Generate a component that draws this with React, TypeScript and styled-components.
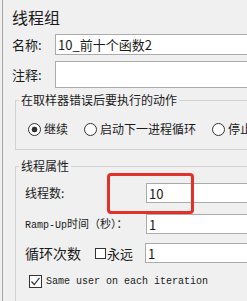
import React from 'react';
import styled, { createGlobalStyle } from 'styled-components';

const GlobalStyle = createGlobalStyle`
  html, body {
    margin: 0;
    padding: 0;
    background: #f0f0f0;
    overflow: hidden;
  }
  body {
    font-family: "Noto Sans CJK SC", "Noto Sans", sans-serif;
    color: #1b1b1b;
  }
`;

const Frame = styled.div`
  position: relative;
  width: 330px;
  height: 301px;
  margin-left: 2px;
  border-left: 1px solid #a6a6a6;
  padding-left: 9px;
  box-sizing: border-box;
  overflow: hidden;
`;

const Title = styled.div`
  padding-top: 5px;
  font-size: 16px;
  line-height: 24px;
`;

const Row = styled.div<{ $top: number; $height: number }>`
  display: flex;
  align-items: center;
  margin-top: ${p => p.$top}px;
  height: ${p => p.$height}px;
`;

const Label = styled.span<{ $width: number; $size?: number }>`
  flex: none;
  width: ${p => p.$width}px;
  font-size: ${p => p.$size ?? 13}px;
  line-height: 16px;
  white-space: nowrap;
`;

const Mono = styled.span`
  font-family: "Liberation Mono", "DejaVu Sans Mono", monospace;
  font-size: 10px;
`;

const Field = styled.div`
  flex: 1;
  align-self: stretch;
  display: flex;
  align-items: center;
  background: #fff;
  border: 1px solid #ababab;
  padding-left: 2px;
  font-size: 13px;
  white-space: nowrap;
`;

const Group = styled.fieldset<{ $top: number }>`
  margin: ${p => p.$top}px 0 0 3px;
  padding: 0;
  border: 1px solid #d2d2d2;
  min-width: 0;
`;

const Legend = styled.legend`
  margin-left: 3px;
  padding: 0 2px;
  font-size: 12px;
  line-height: 16px;
`;

const RadioRow = styled.div`
  display: flex;
  align-items: center;
  gap: 16px;
  padding: 13px 0 12px 12px;
  height: 16px;
`;

const Radio = styled.span<{ $checked?: boolean }>`
  display: inline-flex;
  align-items: center;
  gap: 3px;
  font-size: 12px;
  line-height: 16px;
  white-space: nowrap;

  &::before {
    content: "";
    width: 11px;
    height: 11px;
    border: 1px solid #333;
    border-radius: 50%;
    background: ${p =>
      p.$checked
        ? 'radial-gradient(circle, #333 0 2.6px, #fff 3.2px)'
        : '#fff'};
  }
`;

const Props = styled.div`
  padding: 9px 0 20px 9px;
`;

const Box = styled.span<{ $size: number }>`
  flex: none;
  display: inline-flex;
  align-items: center;
  justify-content: center;
  width: ${p => p.$size}px;
  height: ${p => p.$size}px;
  box-sizing: border-box;
  border: 1px solid #333;
  background: #fff;
`;

const Inline = styled.span`
  flex: none;
  display: flex;
  align-items: center;
  gap: 1px;
  width: 50px;
  font-size: 13px;
`;

const CheckRow = styled.div`
  display: flex;
  align-items: center;
  gap: 4px;
  margin-top: 12px;
  padding-left: 4px;
  height: 13px;
`;

const Highlight = styled.div`
  position: absolute;
  left: 104px;
  top: 173px;
  width: 87px;
  height: 41px;
  box-sizing: border-box;
  border: 3px solid #e2302b;
  border-radius: 4px;
`;

export default function App() {
  return (
    <>
      <GlobalStyle />
      <Frame>
        <Title>线程组</Title>
        <Row $top={5} $height={21}>
          <Label $width={43}>名称:</Label>
          <Field>10_前十个函数2</Field>
        </Row>
        <Row $top={6} $height={27}>
          <Label $width={43}>注释:</Label>
          <Field />
        </Row>

        <Group $top={4}>
          <Legend>在取样器错误后要执行的动作</Legend>
          <RadioRow>
            <Radio $checked>继续</Radio>
            <Radio>启动下一进程循环</Radio>
            <Radio>停止线程</Radio>
          </RadioRow>
        </Group>

        <Group $top={8}>
          <Legend>线程属性</Legend>
          <Props>
            <Row $top={0} $height={20}>
              <Label $width={121} $size={12}>线程数:</Label>
              <Field>10</Field>
            </Row>
            <Row $top={11} $height={20}>
              <Label $width={121} $size={11}>
                <Mono>Ramp-Up</Mono>时间（秒）：
              </Label>
              <Field>1</Field>
            </Row>
            <Row $top={9} $height={20}>
              <Label $width={70} $size={14}>循环次数</Label>
              <Inline>
                <Box $size={11} />
                永远
              </Inline>
              <Field>1</Field>
            </Row>
            <CheckRow>
              <Box $size={13}>
                <svg width="11" height="11" viewBox="0 0 11 11">
                  <polyline points="1.5,5.5 4.2,8.5 9.5,1.8" fill="none" stroke="#333" strokeWidth="1.2" />
                </svg>
              </Box>
              <Mono>Same user on each iteration</Mono>
            </CheckRow>
          </Props>
        </Group>

        <Highlight />
      </Frame>
    </>
  );
}
